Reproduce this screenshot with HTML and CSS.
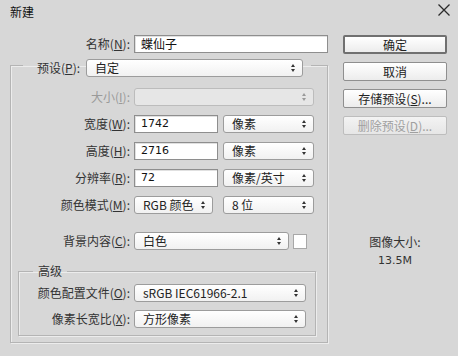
FILE: index.html
```html
<!DOCTYPE html>
<html lang="zh">
<head>
<meta charset="utf-8">
<link rel="stylesheet" href="styles.css">
</head>
<body>
<div class="dialog">
  <div class="titlebar">
    <span class="title">新建</span>
    <svg class="close" width="12" height="12" viewBox="0 0 12 12"><path d="M0.5 0.5 L11.5 11.5 M11.5 0.5 L0.5 11.5" stroke="#2a2a2a" stroke-width="1.3" fill="none"/></svg>
  </div>
  <div class="body">
    <div class="left">
      <div class="row name-row">
        <label class="lbl">名称(<u>N</u>):</label>
        <div class="input name-input">蝶仙子</div>
      </div>
      <fieldset class="group outer">
        <legend class="preset">
          <label class="plbl">预设(<u>P</u>):</label>
          <div class="select preset-sel"><span>自定</span><i class="arr"></i></div>
        </legend>
        <div class="row">
          <label class="lbl dis">大小(<u>I</u>):</label>
          <div class="select size-sel disabled"><span></span><i class="arr"></i></div>
        </div>
        <div class="row">
          <label class="lbl">宽度(<u>W</u>):</label>
          <div class="input num">1742</div>
          <div class="select unit"><span>像素</span><i class="arr"></i></div>
        </div>
        <div class="row">
          <label class="lbl">高度(<u>H</u>):</label>
          <div class="input num">2716</div>
          <div class="select unit"><span>像素</span><i class="arr"></i></div>
        </div>
        <div class="row">
          <label class="lbl">分辨率(<u>R</u>):</label>
          <div class="input num">72</div>
          <div class="select unit"><span>像素/英寸</span><i class="arr"></i></div>
        </div>
        <div class="row">
          <label class="lbl">颜色模式(<u>M</u>):</label>
          <div class="select mode"><span>RGB 颜色</span><i class="arr"></i></div>
          <div class="select unit"><span>8 位</span><i class="arr"></i></div>
        </div>
        <div class="row bg-row">
          <label class="lbl">背景内容(<u>C</u>):</label>
          <div class="select bg-sel"><span>白色</span><i class="arr"></i></div>
          <div class="swatch"></div>
        </div>
        <fieldset class="group inner">
          <legend class="adv">高级</legend>
          <div class="row">
            <label class="lbl">颜色配置文件(<u>O</u>):</label>
            <div class="select wide"><span>sRGB IEC61966-2.1</span><i class="arr"></i></div>
          </div>
          <div class="row">
            <label class="lbl">像素长宽比(<u>X</u>):</label>
            <div class="select wide"><span>方形像素</span><i class="arr"></i></div>
          </div>
        </fieldset>
      </fieldset>
    </div>
    <div class="right">
      <div class="btn default">确定</div>
      <div class="btn">取消</div>
      <div class="btn">存储预设(<u>S</u>)...</div>
      <div class="btn disabled">删除预设(<u>D</u>)...</div>
      <div class="info">
        <div class="info-lbl">图像大小:</div>
        <div class="info-val">13.5M</div>
      </div>
    </div>
  </div>
</div>
</body>
</html>
```
FILE: styles.css
```css
* { box-sizing: border-box; }
html, body { margin: 0; padding: 0; }
body {
  width: 458px;
  height: 356px;
  background: #d7d7d7;
  font-family: "Noto Sans CJK SC", "DejaVu Sans", sans-serif;
  font-size: 12px;
  color: #222;
  overflow: hidden;
}
.dialog { width: 458px; height: 356px; }
.titlebar {
  height: 35px;
  display: flex;
  justify-content: space-between;
  align-items: flex-start;
  padding: 3px 8px 0 10px;
}
.title { font-size: 12px; line-height: 18px; color: #111; }
.close { margin-top: 1px; }
.body {
  display: flex;
  padding-left: 10px;
  gap: 15px;
}
.left { width: 318px; }
.right {
  width: 104px;
  display: flex;
  flex-direction: column;
  gap: 8px;
}
.row {
  display: flex;
  align-items: center;
  height: 18px;
  gap: 5px;
}
u { text-decoration: underline; text-underline-offset: 1px; }
.lbl {
  width: 119px;
  text-align: right;
  color: #333;
  white-space: nowrap;
  line-height: 18px;
  margin-right: -1px;
}
.lbl.dis { color: #9a9a9a; }
.name-row .lbl { width: 120px; }
.input {
  height: 18px;
  background: #fff;
  border: 1px solid #8e8e8e;
  box-shadow: inset 1px 1px 0 #e0e0e0;
  padding-left: 6px;
  line-height: 16px;
  color: #111;
  white-space: nowrap;
}
.name-input { width: 194px; }
.num { width: 84px; font-family: "DejaVu Sans", sans-serif; font-size: 11px; color: #111; }
.select {
  position: relative;
  height: 18px;
  border: 1px solid #9c9c9c;
  border-radius: 3px;
  background: linear-gradient(#ffffff, #f1f1f1);
  padding-left: 8px;
  line-height: 16px;
  color: #222;
  white-space: nowrap;
}
.select.disabled { background: #e6e6e6; border-color: #bcbcbc; }
.select .arr {
  position: absolute;
  right: 6px;
  top: 4px;
  width: 5px;
  height: 8px;
}
.select .arr::before, .select .arr::after {
  content: "";
  position: absolute;
  left: 0;
  border-left: 2.5px solid transparent;
  border-right: 2.5px solid transparent;
}
.select .arr::before { top: 0; border-bottom: 3px solid #333; }
.select .arr::after { bottom: 0; border-top: 3px solid #333; }
.select.disabled .arr::before { border-bottom-color: #9a9a9a; }
.select.disabled .arr::after { border-top-color: #9a9a9a; }
.group {
  margin: 0;
  border: 1px solid #b4b4b4;
  box-shadow: 1px 1px 0 #ececec, inset 1px 1px 0 #ececec;
  min-width: 0;
}
.outer {
  width: 318px;
  margin-top: 0;
  padding: 11px 0 6px 0;
  display: flex;
  flex-direction: column;
  gap: 9px;
}
.preset {
  display: flex;
  align-items: center;
  gap: 6px;
  padding: 6px 8px 0 14px;
  margin-left: 12px;
}
.plbl { color: #333; line-height: 18px; white-space: nowrap; }
.preset-sel { width: 217px; }
.size-sel { width: 180px; }
.unit { width: 91px; }
.mode { width: 79px; margin-right: 5px; }
.bg-row { margin-top: 9px; }
.bg-sel { width: 155px; }
.swatch {
  width: 14px;
  height: 15px;
  background: #fff;
  border: 1px solid #a8a8a8;
  margin-left: -1px;
}
.inner {
  margin: 5px 11px 0 7px;
  padding: 6px 0 7px 0;
  display: flex;
  flex-direction: column;
  gap: 8px;
}
.inner .lbl { width: 111px; }
.adv { padding: 0 5px; margin-left: 14px; color: #333; line-height: 14px; }
.wide { width: 172px; }
.btn {
  height: 19px;
  border: 1px solid #8f8f8f;
  border-radius: 2px;
  background: linear-gradient(#ffffff, #ececec);
  text-align: center;
  line-height: 17px;
  color: #222;
  white-space: nowrap;
}
.btn.default { border: 2px solid #707070; line-height: 15px; }
.btn.disabled { color: #a0a0a0; border-color: #bdbdbd; background: linear-gradient(#f3f3f3, #e6e6e6); }
.info { margin-top: 91px; text-align: center; color: #333; }
.info-lbl { line-height: 16px; }
.info-val { margin-top: 3px; line-height: 16px; font-family: "DejaVu Sans", sans-serif; font-size: 11px; }
```
